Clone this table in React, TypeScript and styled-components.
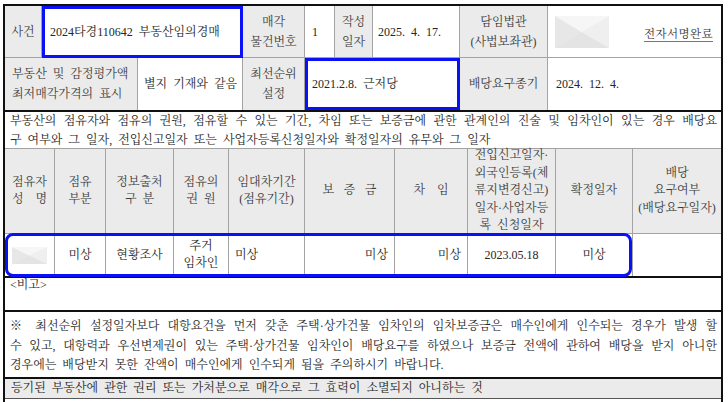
import React from 'react';
import styled, { createGlobalStyle, css } from 'styled-components';

const BLUE = '#0a12f5';
const GRID = '#a3a3a3';
const LABEL_BG = '#ebebeb';
const INK = '#262626';
const LABEL_INK = '#3c3c3c';

const GlobalStyle = createGlobalStyle`
  html, body { margin: 0; padding: 0; background: #fff; }
  body {
    font-family: "Liberation Serif", "Noto Serif CJK KR", "Noto Sans CJK KR", serif;
    font-size: 12px;
    color: ${INK};
    word-spacing: 3px;
  }
`;

const Sheet = styled.div`
  margin: 4px 0 0 3px;
  width: 720px;
  min-height: 398px;
  box-sizing: border-box;
  border: 2px solid #101010;
  border-bottom: none;
`;

const InfoGrid = styled.div`
  display: grid;
  grid-template-columns: 37px 96px 105px 62px 30px 38px 87px 88px 173px;
  grid-template-rows: 52px 52px;
`;

type Align = 'left' | 'center' | 'right';

const alignItems = (a?: Align) => (a === 'left' ? 'flex-start' : a === 'right' ? 'flex-end' : 'center');

const InfoCell = styled.div<{
  $label?: boolean;
  $span?: number;
  $align?: Align;
  $pad?: number;
  $hl?: boolean;
  $end?: boolean;
  $noBottom?: boolean;
}>`
  box-sizing: border-box;
  grid-column: span ${(p) => p.$span ?? 1};
  display: flex;
  flex-direction: column;
  justify-content: center;
  align-items: ${(p) => alignItems(p.$align)};
  text-align: ${(p) => p.$align ?? 'center'};
  padding: 0 ${(p) => p.$pad ?? 0}px;
  line-height: 20px;
  white-space: nowrap;
  background: ${(p) => (p.$label ? LABEL_BG : '#fff')};
  color: ${(p) => (p.$label ? LABEL_INK : INK)};
  border-right: ${(p) => (p.$end ? 'none' : `1px solid ${GRID}`)};
  border-bottom: ${(p) => (p.$noBottom ? 'none' : `1px solid ${GRID}`)};
  ${(p) =>
    p.$hl &&
    css`
      border: 3px solid ${BLUE};
    `}
`;

const SignCell = styled.div`
  box-sizing: border-box;
  display: flex;
  align-items: center;
  padding: 0 8px 0 7px;
  background: #fff;
  border-bottom: 1px solid ${GRID};
`;

const Signed = styled.span`
  margin-left: auto;
  margin-top: 2px;
  color: #333;
  font-size: 11.5px;
  letter-spacing: 0.4px;
  word-spacing: 0;
  text-decoration: underline;
  text-decoration-color: #777;
  text-underline-offset: 3px;
`;

const HeavyRule = styled.div`
  height: 2px;
  background: #101010;
`;

const Notice = styled.div<{ $h: number; $lh: number; $top: number; $line?: boolean }>`
  box-sizing: border-box;
  height: ${(p) => p.$h}px;
  padding: ${(p) => p.$top}px 4px 0 5px;
  line-height: ${(p) => p.$lh}px;
  color: ${INK};
  border-bottom: ${(p) => (p.$line ? `1px solid ${GRID}` : 'none')};
`;

const NoticeLine = styled.div<{ $justify?: boolean }>`
  white-space: nowrap;
  ${(p) =>
    p.$justify
      ? css`
          white-space: normal;
          word-spacing: 0;
          text-align: justify;
          text-align-last: justify;
        `
      : css`
          word-spacing: 3px;
        `}
`;

const OccTable = styled.div`
  position: relative;
`;

const OccGrid = styled.div`
  display: grid;
  grid-template-columns: 50px 51px 68px 55px 76px 90px 73px 88px 77px 88px;
  grid-template-rows: 85px 42px;
`;

const HeadCell = styled.div<{ $ls?: number; $end?: boolean }>`
  box-sizing: border-box;
  display: flex;
  flex-direction: column;
  justify-content: center;
  align-items: center;
  text-align: center;
  white-space: nowrap;
  line-height: 17.4px;
  background: ${LABEL_BG};
  color: ${LABEL_INK};
  letter-spacing: ${(p) => p.$ls ?? 0}px;
  padding-left: ${(p) => p.$ls ?? 0}px;
  border-right: ${(p) => (p.$end ? 'none' : `1px solid ${GRID}`)};
  border-bottom: 1px solid ${GRID};
`;

const DataCell = styled.div<{ $align?: Align; $pad?: number; $end?: boolean }>`
  box-sizing: border-box;
  display: flex;
  flex-direction: column;
  justify-content: center;
  align-items: ${(p) => alignItems(p.$align)};
  text-align: center;
  white-space: nowrap;
  line-height: 17px;
  padding: 0 ${(p) => p.$pad ?? 0}px;
  color: ${INK};
  border-right: ${(p) => (p.$end ? 'none' : `1px solid ${GRID}`)};
`;

const RowHighlight = styled.div`
  position: absolute;
  left: 0;
  top: 84px;
  width: 627px;
  height: 44px;
  box-sizing: border-box;
  border: 3px solid ${BLUE};
  border-radius: 8px;
  pointer-events: none;
`;

const Remark = styled.div`
  height: 32px;
  padding: 0 5px;
  line-height: 14px;
  color: ${INK};
`;

const Heading = styled.div`
  height: 19px;
  line-height: 19px;
  padding-left: 6px;
  background: ${LABEL_BG};
  color: ${INK};
  border-bottom: 1px solid #555;
`;

const TailGap = styled.div`
  height: 3px;
  border-bottom: 1px solid #8a8a8a;
`;

const Mosaic: React.FC<{ w: number; h: number }> = ({ w, h }) => (
  <svg width={w} height={h} viewBox="0 0 55 32" preserveAspectRatio="none">
    <rect width="55" height="32" fill="#f2f2f2" />
    <polygon points="0,0 27,16 0,32" fill="#e7e7e7" />
    <polygon points="55,0 27,16 55,32" fill="#efefef" />
    <polygon points="0,0 55,0 27,16" fill="#f6f6f6" />
    <polygon points="0,32 55,32 27,16" fill="#e4e4e4" />
  </svg>
);

export default function App() {
  return (
    <>
      <GlobalStyle />
      <Sheet>
        <InfoGrid>
          <InfoCell $label>사건</InfoCell>
          <InfoCell $span={2} $align="left" $pad={5} $hl>
            2024타경110642 부동산임의경매
          </InfoCell>
          <InfoCell $label>
            <span>매각</span>
            <span>물건번호</span>
          </InfoCell>
          <InfoCell $align="left" $pad={7}>1</InfoCell>
          <InfoCell $label>
            <span>작성</span>
            <span>일자</span>
          </InfoCell>
          <InfoCell $align="left" $pad={5}>2025. 4. 17.</InfoCell>
          <InfoCell $label>
            <span>담임법관</span>
            <span>(사법보좌관)</span>
          </InfoCell>
          <SignCell>
            <Mosaic w={54} h={32} />
            <Signed>전자서명완료</Signed>
          </SignCell>

          <InfoCell $label $span={2} $align="left" $pad={7} $noBottom>
            <span>부동산 및 감정평가액</span>
            <span>최저매각가격의 표시</span>
          </InfoCell>
          <InfoCell $align="left" $pad={6} $noBottom>별지 기재와 같음</InfoCell>
          <InfoCell $label $noBottom>
            <span>최선순위</span>
            <span>설정</span>
          </InfoCell>
          <InfoCell $span={3} $align="left" $pad={4} $hl>
            2021.2.8. 근저당
          </InfoCell>
          <InfoCell $label $noBottom>배당요구종기</InfoCell>
          <InfoCell $align="left" $pad={8} $end $noBottom>
            2024. 12. 4.
          </InfoCell>
        </InfoGrid>

        <HeavyRule />

        <Notice $h={37} $lh={18.5} $top={0} $line>
          <NoticeLine $justify>
            부동산의 점유자와 점유의 권원, 점유할 수 있는 기간, 차임 또는 보증금에 관한 관계인의 진술 및 임차인이 있는 경우 배당요
          </NoticeLine>
          <NoticeLine>구 여부와 그 일자, 전입신고일자 또는 사업자등록신청일자와 확정일자의 유무와 그 일자</NoticeLine>
        </Notice>

        <OccTable>
          <OccGrid>
            <HeadCell>
              <span>점유자</span>
              <span>성　명</span>
            </HeadCell>
            <HeadCell>
              <span>점유</span>
              <span>부분</span>
            </HeadCell>
            <HeadCell>
              <span>정보출처</span>
              <span>구 분</span>
            </HeadCell>
            <HeadCell>
              <span>점유의</span>
              <span>권 원</span>
            </HeadCell>
            <HeadCell>
              <span>임대차기간</span>
              <span>(점유기간)</span>
            </HeadCell>
            <HeadCell $ls={9.5}>보증금</HeadCell>
            <HeadCell>차　임</HeadCell>
            <HeadCell>
              <span>전입신고일자·</span>
              <span>외국인등록(체</span>
              <span>류지변경신고)</span>
              <span>일자·사업자등</span>
              <span>록 신청일자</span>
            </HeadCell>
            <HeadCell>확정일자</HeadCell>
            <HeadCell $end>
              <span>배당</span>
              <span>요구여부</span>
              <span>(배당요구일자)</span>
            </HeadCell>

            <DataCell $align="left" $pad={7}>
              <Mosaic w={35} h={17} />
            </DataCell>
            <DataCell>미상</DataCell>
            <DataCell>현황조사</DataCell>
            <DataCell>
              <span>주거</span>
              <span>임차인</span>
            </DataCell>
            <DataCell $align="left" $pad={6}>미상</DataCell>
            <DataCell $align="right" $pad={6}>미상</DataCell>
            <DataCell $align="right" $pad={6}>미상</DataCell>
            <DataCell>2023.05.18</DataCell>
            <DataCell>미상</DataCell>
            <DataCell $end />
          </OccGrid>
          <RowHighlight />
        </OccTable>

        <HeavyRule />

        <Remark>&lt;비고&gt;</Remark>

        <HeavyRule />

        <Notice $h={65} $lh={19.5} $top={5}>
          <NoticeLine $justify>
            ※ 최선순위 설정일자보다 대항요건을 먼저 갖춘 주택·상가건물 임차인의 임차보증금은 매수인에게 인수되는 경우가 발생 할
          </NoticeLine>
          <NoticeLine $justify>
            수 있고, 대항력과 우선변제권이 있는 주택·상가건물 임차인이 배당요구를 하였으나 보증금 전액에 관하여 배당을 받지 아니한
          </NoticeLine>
          <NoticeLine>경우에는 배당받지 못한 잔액이 매수인에게 인수되게 됨을 주의하시기 바랍니다.</NoticeLine>
        </Notice>

        <HeavyRule />

        <Heading>등기된 부동산에 관한 권리 또는 가처분으로 매각으로 그 효력이 소멸되지 아니하는 것</Heading>
        <TailGap />
      </Sheet>
    </>
  );
}
